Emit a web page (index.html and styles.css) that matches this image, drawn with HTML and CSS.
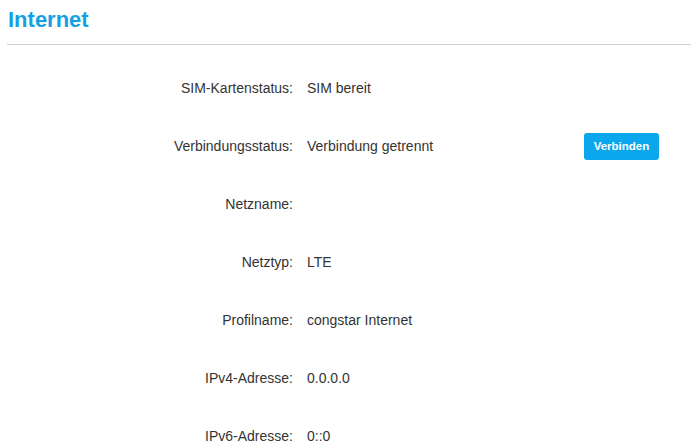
FILE: index.html
```html
<!DOCTYPE html>
<html>
<head>
	<meta charset="utf-8">
	<title>Internet</title>
	<link rel="stylesheet" href="styles.css">
</head>
<body>
  <main class="page">
    <h1 class="title">Internet</h1>

    <section class="info">
      <div class="row">
        <span class="label">SIM-Kartenstatus:</span>
        <span class="value">SIM bereit</span>
      </div>
      <div class="row">
        <span class="label">Verbindungsstatus:</span>
        <span class="value">Verbindung getrennt</span>
        <button class="connect">Verbinden</button>
      </div>
      <div class="row">
        <span class="label">Netzname:</span>
        <span class="value"></span>
      </div>
      <div class="row">
        <span class="label">Netztyp:</span>
        <span class="value">LTE</span>
      </div>
      <div class="row">
        <span class="label">Profilname:</span>
        <span class="value">congstar Internet</span>
      </div>
      <div class="row">
        <span class="label">IPv4-Adresse:</span>
        <span class="value">0.0.0.0</span>
      </div>
      <div class="row">
        <span class="label">IPv6-Adresse:</span>
        <span class="value">0::0</span>
      </div>
    </section>
  </main>
</body>
</html>
```

FILE: styles.css
```css
html body{
  margin: 0;
  background: #fff;
  font-family: "Liberation Sans", Arial, sans-serif;
  color: #333;
  overflow: hidden;
}

.page{
  padding-left: 7px;
}

.title{
  margin: 0 0 14px 0;
  padding: 6px 0 0 1px;
  height: 45px;
  box-sizing: border-box;
  font-size: 22px;
  font-weight: bold;
  color: #14a0e4;
  line-height: 28px;
  border-bottom: 1px solid #cfcfcf;
}

.info{
  display: flex;
  flex-direction: column;
}

.row{
  display: grid;
  grid-template-columns: 286px 263px auto;
  column-gap: 14px;
  align-items: center;
  height: 58px;
  font-size: 14px;
}

.label{
  text-align: right;
}

.connect{
  justify-self: start;
  width: 75px;
  height: 27px;
  border: none;
  border-radius: 3px;
  background: #0aa7ec;
  color: #fff;
  font-family: "Liberation Sans", Arial, sans-serif;
  font-size: 11.5px;
  font-weight: bold;
  padding: 0;
}
```
